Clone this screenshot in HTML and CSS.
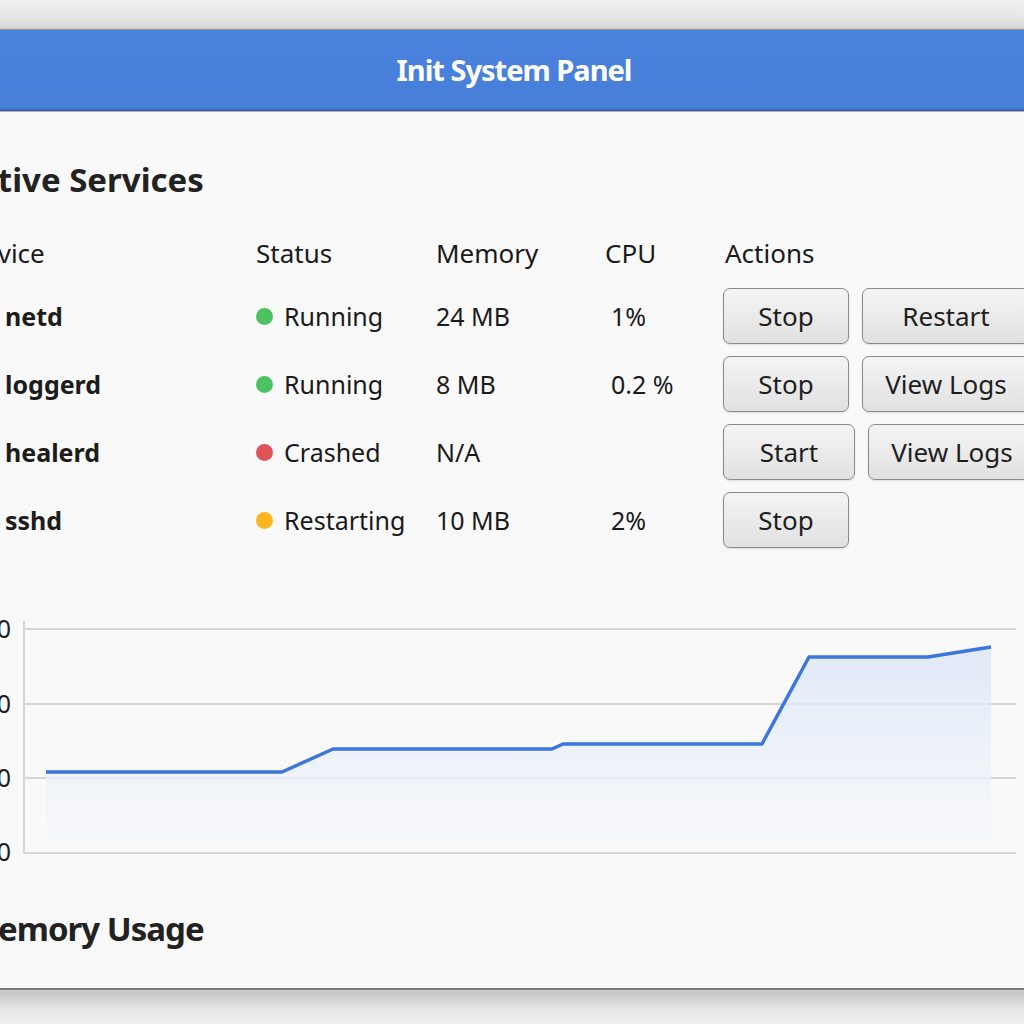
FILE: index.html
```html
<!DOCTYPE html>
<html>
<head>
<meta charset="utf-8">
<link rel="stylesheet" href="styles.css">
</head>
<body>
<div class="window">
  <div class="titlebar">Init System Panel</div>
  <div class="content">
    <h2 class="heading">Active Services</h2>
    <div class="table">
      <div class="row head">
        <div class="c-name">Service</div>
        <div class="c-status">Status</div>
        <div class="c-mem">Memory</div>
        <div class="c-cpu">CPU</div>
        <div class="c-act">Actions</div>
      </div>
      <div class="row">
        <div class="c-name name">netd</div>
        <div class="c-status"><span class="dot green"></span>Running</div>
        <div class="c-mem">24 MB</div>
        <div class="c-cpu val">1%</div>
        <div class="c-act"><button class="btn">Stop</button><button class="btn second">Restart</button></div>
      </div>
      <div class="row">
        <div class="c-name name">loggerd</div>
        <div class="c-status"><span class="dot green"></span>Running</div>
        <div class="c-mem">8 MB</div>
        <div class="c-cpu val">0.2 %</div>
        <div class="c-act"><button class="btn">Stop</button><button class="btn second">View Logs</button></div>
      </div>
      <div class="row">
        <div class="c-name name">healerd</div>
        <div class="c-status"><span class="dot red"></span>Crashed</div>
        <div class="c-mem">N/A</div>
        <div class="c-cpu val"></div>
        <div class="c-act"><button class="btn wide">Start</button><button class="btn second">View Logs</button></div>
      </div>
      <div class="row">
        <div class="c-name name">sshd</div>
        <div class="c-status"><span class="dot amber"></span>Restarting</div>
        <div class="c-mem">10 MB</div>
        <div class="c-cpu val">2%</div>
        <div class="c-act"><button class="btn">Stop</button></div>
      </div>
    </div>
    <svg class="chart" width="1070" height="270" viewBox="0 0 1070 270">
      <defs>
        <linearGradient id="fillg" x1="0" y1="0" x2="0" y2="1">
          <stop offset="0" stop-color="#dbe6f8"/>
          <stop offset="1" stop-color="#f6f8fb"/>
        </linearGradient>
      </defs>
      <line x1="68" y1="30" x2="1060" y2="30" class="grid"/>
      <line x1="68" y1="105" x2="1060" y2="105" class="grid"/>
      <line x1="68" y1="179" x2="1060" y2="179" class="grid"/>
      <line x1="68" y1="254" x2="1060" y2="254" class="grid"/>
      <line x1="68" y1="22" x2="68" y2="255" class="grid"/>
      <polygon class="area" points="90,173 326,173 377,150 596,150 607,145 806,145 853,58 972,58 1035,48 1035,240 90,240"/>
      <polyline class="plot" points="90,173 326,173 377,150 596,150 607,145 806,145 853,58 972,58 1035,48"/>
      <text x="55" y="39" class="lbl">30</text>
      <text x="55" y="114" class="lbl">20</text>
      <text x="55" y="188" class="lbl">10</text>
      <text x="55" y="262" class="lbl">0</text>
    </svg>
    <h2 class="heading mem">Memory Usage</h2>
  </div>
</div>
</body>
</html>
```
FILE: styles.css
```css
html, body {
  margin: 0;
  padding: 0;
}
body {
  width: 1024px;
  height: 1024px;
  overflow: hidden;
  background: linear-gradient(to bottom, #f2f2f2 0px, #e2e2e2 22px, #d0d0d0 29px, #d0d0d0 991px, #c4c4c4 992px, #e6e6e6 1010px, #eeeeee 1024px);
  font-family: "Noto Sans", "Open Sans", sans-serif;
  color: #1a1a1a;
}
.window {
  margin-top: 29px;
  margin-left: -44px;
  width: 1116px;
  height: 961px;
  border-top: 1px solid #8f8f8f;
  border-bottom: 2px solid #7a7a7a;
  background: #f9f9f9;
  overflow: hidden;
  box-sizing: border-box;
}
.titlebar {
  height: 81px;
  background: linear-gradient(to bottom, #4b82de, #467ed8);
  border-bottom: 2px solid #2f66c8;
  box-shadow: 0 1px 0 #b9ad94;
  color: #ffffff;
  font-weight: 700;
  font-size: 29px;
  letter-spacing: -1px;
  display: flex;
  align-items: center;
  justify-content: center;
  box-sizing: border-box;
}
.content {
  padding: 47px 0 0 2px;
}
.heading {
  margin: 0;
  font-size: 33px;
  line-height: 44px;
  font-weight: 700;
  color: #222;
}
.heading.mem {
  margin-top: 38px;
  margin-left: 10px;
  letter-spacing: -1px;
}
.table {
  margin-top: 22px;
}
.row {
  display: grid;
  grid-template-columns: 298px 180px 169px 118px 1fr;
  align-items: center;
  height: 68px;
  font-size: 25px;
}
.row.head {
  height: 58px;
  font-size: 26px;
}
.row.head .c-act {
  padding-left: 2px;
}
.name {
  font-weight: 700;
  padding-left: 47px;
  color: #1c1c1c;
}
.c-status {
  display: flex;
  align-items: center;
}
.dot {
  width: 17px;
  height: 17px;
  border-radius: 50%;
  margin-right: 11px;
  flex: none;
}
.green { background: #4cc262; }
.red { background: #e0525a; }
.amber { background: #fbb51f; }
.val {
  padding-left: 6px;
}
.c-act {
  display: flex;
  gap: 13px;
  white-space: nowrap;
}
.btn {
  font-family: "Noto Sans", "Open Sans", sans-serif;
  font-size: 26px;
  color: #1e1e1e;
  height: 56px;
  width: 126px;
  padding: 0;
  white-space: nowrap;
  border: 1px solid #8a8a8a;
  border-radius: 7px;
  background: linear-gradient(to bottom, #f4f4f4, #e1e1e1);
  box-shadow: 0 1px 2px rgba(0, 0, 0, 0.12);
  flex: none;
}
.btn.wide {
  width: 132px;
}
.btn.second {
  width: 168px;
}
.chart {
  display: block;
  margin-top: 45px;
  margin-left: -2px;
}
.grid {
  stroke: #d6d6d6;
  stroke-width: 2;
}
.area {
  fill: url(#fillg);
  opacity: 0.8;
}
.plot {
  fill: none;
  stroke: #3a76dc;
  stroke-width: 3.5;
  stroke-linejoin: round;
}
.lbl {
  font-family: "Noto Sans", "Open Sans", sans-serif;
  font-size: 25px;
  fill: #1e1e1e;
  text-anchor: end;
}
```
